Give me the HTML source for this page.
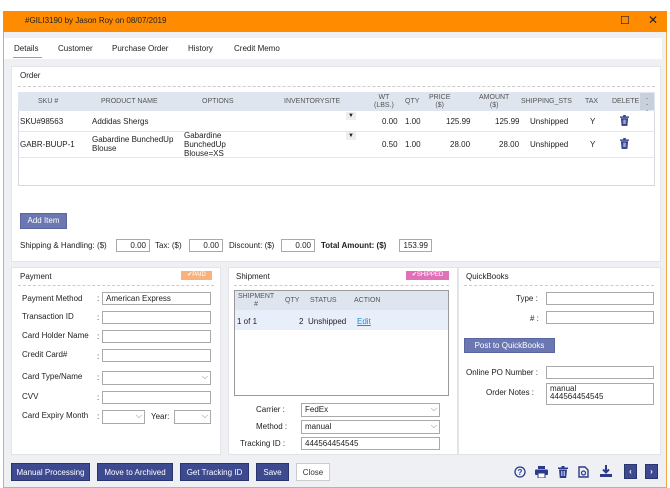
<!DOCTYPE html><html><head><style>
*{box-sizing:border-box;margin:0;padding:0}
body{width:670px;height:488px;background:#fff;font-family:"Liberation Sans",sans-serif;font-size:8px;color:#222;position:relative;overflow:hidden}
.a{position:absolute}
.win{left:3px;top:11px;width:664px;height:477px;border:1px solid #f5a544;background:#eef0f3}
.title{left:3px;top:11px;width:664px;height:21px;background:#ff8c00;color:#222;font-size:8px;padding:5px 0 0 22px}
.panel{background:#fff;border:1px solid #e2e4e8}
.inp{position:absolute;background:#fff;border:1px solid #aaa;height:13px;font-size:8px;padding:1px 3px;white-space:nowrap}
.sel::after{content:"⌵";position:absolute;right:2px;top:0;font-size:8px;color:#777}
.sel{position:absolute;background:#fff;border:1px solid #aaa;height:14px;padding:1px 3px;font-size:8px}
.btn{position:absolute;background:#3d4a8f;color:#fff;font-size:8px;text-align:center;height:18px;line-height:18px;border:1px solid #2a3570;white-space:nowrap}
.dash{position:absolute;border-top:1px dashed #ccc}
.lbl{position:absolute;font-size:8px;white-space:nowrap}
.hd span{white-space:nowrap}
</style></head><body>
<svg width="0" height="0" style="position:absolute"><defs>
<symbol id="trash" viewBox="0 0 10 12"><rect x="0" y="1.5" width="10" height="1.5" fill="#2b3a8a"/><rect x="3.5" y="0" width="3" height="1.5" fill="#2b3a8a"/><path d="M1 3.5h8l-0.8 8.5h-6.4z" fill="#2b3a8a"/><path d="M3.5 5v5M5 5v5M6.5 5v5" stroke="#fff" stroke-width="0.6"/></symbol>
</defs></svg>
<div class="a win"></div>
<div class="a title">#GILI3190 by Jason Roy on 08/07/2019
<span class="a" style="left:617px;top:3px;font-size:11px">☐</span><span class="a" style="left:645px;top:2px;font-size:12px">✕</span></div>
<div class="a" style="left:4px;top:38px;width:658px;height:21px;background:#fff"></div>
<div class="lbl" style="left:14px;top:44px">Details</div>
<div class="a" style="left:13px;top:57px;width:29px;height:1px;background:#ff8c00"></div>
<div class="lbl" style="left:58px;top:44px">Customer</div>
<div class="lbl" style="left:112px;top:44px">Purchase Order</div>
<div class="lbl" style="left:188px;top:44px">History</div>
<div class="lbl" style="left:234px;top:44px">Credit Memo</div>

<div class="a panel" style="left:11px;top:66px;width:650px;height:196px"></div>
<div class="lbl" style="left:20px;top:71px">Order</div>
<div class="dash" style="left:18px;top:86px;width:637px"></div>
<div class="a" style="left:18px;top:92px;width:637px;height:94px;border:1px solid #d6dae0;background:#fff"></div>
<div class="a" style="left:18px;top:92px;width:637px;height:19px;background:#dfe5ee"></div>
<div class="a" style="left:640px;top:93px;width:14px;height:17px;background:#c8d0dc;color:#667;font-size:9px;text-align:center;line-height:6px;padding-top:2px">·<br>·<br>·</div>
<div class="hd" style="position:absolute;left:18px;top:92px;color:#555;font-size:7px">
<span class="a" style="left:20px;top:6px">SKU #</span>
<span class="a" style="left:83px;top:6px">PRODUCT NAME</span>
<span class="a" style="left:184px;top:6px">OPTIONS</span>
<span class="a" style="left:266px;top:6px">INVENTORYSITE</span>
<span class="a" style="left:356px;top:2px;text-align:center;line-height:8px">WT<br>(LBS.)</span>
<span class="a" style="left:387px;top:6px">QTY</span>
<span class="a" style="left:411px;top:2px;text-align:center;line-height:8px">PRICE<br>($)</span>
<span class="a" style="left:461px;top:2px;text-align:center;line-height:8px">AMOUNT<br>($)</span>
<span class="a" style="left:503px;top:6px">SHIPPING_STS</span>
<span class="a" style="left:567px;top:6px">TAX</span>
<span class="a" style="left:594px;top:6px">DELETE</span>
</div>
<div class="a" style="left:18px;top:131px;width:637px;border-top:1px solid #e6e6e6"></div>
<div class="a" style="left:18px;top:157px;width:637px;border-top:1px solid #e6e6e6"></div>
<div class="lbl" style="left:20px;top:117px">SKU#98563</div>
<div class="lbl" style="left:92px;top:117px">Addidas Shergs</div>
<div class="lbl" style="left:382px;top:117px">0.00</div><div class="lbl" style="left:405px;top:117px">1.00</div>
<div class="lbl" style="left:446px;top:117px">125.99</div><div class="lbl" style="left:495px;top:117px">125.99</div>
<div class="lbl" style="left:530px;top:117px">Unshipped</div><div class="lbl" style="left:590px;top:117px">Y</div>
<svg class="a" style="left:620px;top:115px" width="9" height="11"><use href="#trash"/></svg>
<div class="lbl" style="left:346px;top:112px;font-size:6px;background:#eee;padding:1px 2px">▼</div>
<div class="lbl" style="left:20px;top:140px">GABR-BUUP-1</div>
<div class="lbl" style="left:92px;top:135px;line-height:9px">Gabardine BunchedUp<br>Blouse</div>
<div class="lbl" style="left:184px;top:131px;line-height:9px">Gabardine<br>BunchedUp<br>Blouse=XS</div>
<div class="lbl" style="left:346px;top:132px;font-size:6px;background:#eee;padding:1px 2px">▼</div>
<div class="lbl" style="left:382px;top:140px">0.50</div><div class="lbl" style="left:405px;top:140px">1.00</div>
<div class="lbl" style="left:450px;top:140px">28.00</div><div class="lbl" style="left:499px;top:140px">28.00</div>
<div class="lbl" style="left:530px;top:140px">Unshipped</div><div class="lbl" style="left:590px;top:140px">Y</div>
<svg class="a" style="left:620px;top:138px" width="9" height="11"><use href="#trash"/></svg>

<div class="btn" style="left:20px;top:213px;width:47px;height:16px;line-height:14px;background:#6a77b0;border-color:#5966a0">Add Item</div>
<div class="lbl" style="left:20px;top:241px">Shipping &amp; Handling: ($)</div>
<div class="inp" style="left:116px;top:239px;width:34px;text-align:right">0.00</div>
<div class="lbl" style="left:155px;top:241px">Tax: ($)</div>
<div class="inp" style="left:189px;top:239px;width:34px;text-align:right">0.00</div>
<div class="lbl" style="left:229px;top:241px">Discount: ($)</div>
<div class="inp" style="left:281px;top:239px;width:34px;text-align:right">0.00</div>
<div class="lbl" style="left:321px;top:241px;font-weight:bold">Total Amount: ($)</div>
<div class="inp" style="left:399px;top:239px;width:33px;text-align:right">153.99</div>

<div class="a panel" style="left:11px;top:267px;width:210px;height:188px"></div>
<div class="a panel" style="left:228px;top:267px;width:230px;height:188px"></div>
<div class="a panel" style="left:458px;top:267px;width:203px;height:188px"></div>
<div class="lbl" style="left:20px;top:272px">Payment</div>
<div class="a" style="left:181px;top:271px;width:31px;height:9px;background:#f9b27c;color:#fff;font-size:6px;text-align:center;line-height:9px">✔PAID</div>
<div class="dash" style="left:18px;top:285px;width:196px"></div>
<div class="lbl" style="left:22px;top:294px">Payment Method</div><div class="lbl" style="left:97px;top:294px">:</div>
<div class="inp" style="left:102px;top:292px;width:109px">American Express</div>
<div class="lbl" style="left:22px;top:312px">Transaction ID</div><div class="lbl" style="left:97px;top:313px">:</div>
<div class="inp" style="left:102px;top:311px;width:109px"></div>
<div class="lbl" style="left:22px;top:331px">Card Holder Name</div><div class="lbl" style="left:97px;top:332px">:</div>
<div class="inp" style="left:102px;top:330px;width:109px"></div>
<div class="lbl" style="left:22px;top:350px">Credit Card#</div><div class="lbl" style="left:97px;top:352px">:</div>
<div class="inp" style="left:102px;top:349px;width:109px"></div>
<div class="lbl" style="left:22px;top:372px">Card Type/Name</div><div class="lbl" style="left:97px;top:373px">:</div>
<div class="sel" style="left:102px;top:371px;width:109px"></div>
<div class="lbl" style="left:22px;top:392px">CVV</div><div class="lbl" style="left:97px;top:393px">:</div>
<div class="inp" style="left:102px;top:391px;width:109px"></div>
<div class="lbl" style="left:22px;top:411px">Card Expiry Month</div><div class="lbl" style="left:97px;top:412px">:</div>
<div class="sel" style="left:102px;top:410px;width:43px"></div>
<div class="lbl" style="left:151px;top:412px">Year:</div>
<div class="sel" style="left:174px;top:410px;width:37px"></div>

<div class="lbl" style="left:236px;top:272px">Shipment</div>
<div class="a" style="left:406px;top:271px;width:43px;height:9px;background:#e070b8;color:#fff;font-size:6px;text-align:center;line-height:9px">✔SHIPPED</div>
<div class="dash" style="left:234px;top:285px;width:215px"></div>
<div class="a" style="left:234px;top:290px;width:215px;height:106px;border:1px solid #999;background:#fff"></div>
<div class="a" style="left:235px;top:291px;width:213px;height:19px;background:#dfe5ee"></div>
<div class="a" style="left:235px;top:310px;width:213px;height:20px;background:#e8eefa"></div>
<div class="lbl" style="left:238px;top:293px;font-size:7px;color:#555;text-align:center;line-height:8px">SHIPMENT<br>#</div>
<div class="lbl" style="left:285px;top:297px;font-size:7px;color:#555">QTY</div>
<div class="lbl" style="left:310px;top:297px;font-size:7px;color:#555">STATUS</div>
<div class="lbl" style="left:354px;top:297px;font-size:7px;color:#555">ACTION</div>
<div class="lbl" style="left:237px;top:317px">1 of 1</div>
<div class="lbl" style="left:299px;top:317px">2</div>
<div class="lbl" style="left:308px;top:317px">Unshipped</div>
<div class="lbl" style="left:357px;top:317px;color:#1a8fd8;text-decoration:underline">Edit</div>
<div class="lbl" style="left:256px;top:405px">Carrier :</div>
<div class="sel" style="left:301px;top:403px;width:139px">FedEx</div>
<div class="lbl" style="left:256px;top:422px">Method :</div>
<div class="sel" style="left:301px;top:420px;width:139px">manual</div>
<div class="lbl" style="left:240px;top:439px">Tracking ID :</div>
<div class="inp" style="left:301px;top:437px;width:139px">444564454545</div>

<div class="lbl" style="left:466px;top:272px">QuickBooks</div>
<div class="dash" style="left:464px;top:285px;width:190px"></div>
<div class="lbl" style="left:516px;top:294px">Type :</div>
<div class="inp" style="left:546px;top:292px;width:108px"></div>
<div class="lbl" style="left:530px;top:314px"># :</div>
<div class="inp" style="left:546px;top:311px;width:108px"></div>
<div class="btn" style="left:464px;top:338px;width:91px;height:15px;line-height:13px;background:#6a77b0;border-color:#5966a0">Post to QuickBooks</div>
<div class="lbl" style="left:466px;top:368px">Online PO Number :</div>
<div class="inp" style="left:546px;top:366px;width:108px"></div>
<div class="lbl" style="left:486px;top:388px">Order Notes :</div>
<div class="inp" style="left:546px;top:383px;width:108px;height:22px;line-height:8px">manual<br>444564454545</div>

<div class="btn" style="left:11px;top:463px;width:79px">Manual Processing</div>
<div class="btn" style="left:97px;top:463px;width:76px">Move to Archived</div>
<div class="btn" style="left:180px;top:463px;width:69px">Get Tracking ID</div>
<div class="btn" style="left:256px;top:463px;width:33px">Save</div>
<div class="btn" style="left:296px;top:463px;width:34px;background:#fff;color:#333;border-color:#ccc">Close</div>
<svg class="a" style="left:514px;top:466px" width="12" height="12" viewBox="0 0 12 12"><circle cx="6" cy="6" r="5" fill="none" stroke="#2b3a8a" stroke-width="1.3"/><text x="6" y="9" font-size="8" text-anchor="middle" fill="#2b3a8a" font-family="Liberation Sans" font-weight="bold">?</text></svg>
<svg class="a" style="left:535px;top:466px" width="13" height="12" viewBox="0 0 13 12"><rect x="3" y="0" width="7" height="3" fill="#2b3a8a"/><rect x="0" y="3.5" width="13" height="5.5" rx="1" fill="#2b3a8a"/><rect x="3" y="7" width="7" height="5" fill="#fff" stroke="#2b3a8a"/></svg>
<svg class="a" style="left:558px;top:466px" width="10" height="12"><use href="#trash"/></svg>
<svg class="a" style="left:578px;top:465px" width="11" height="13" viewBox="0 0 11 13"><path d="M1 2h6l3 3v7H1z" fill="none" stroke="#2b3a8a" stroke-width="1.4"/><circle cx="5.5" cy="8" r="2" fill="none" stroke="#2b3a8a" stroke-width="1.2"/></svg>
<svg class="a" style="left:600px;top:465px" width="12" height="12" viewBox="0 0 12 12"><path d="M6 0v7M3 4.5l3 3 3-3" stroke="#2b3a8a" stroke-width="2" fill="none"/><rect x="0" y="9" width="12" height="3" fill="#2b3a8a"/></svg>
<div class="btn" style="left:624px;top:464px;width:13px;height:15px;line-height:13px;font-weight:bold">‹</div>
<div class="btn" style="left:645px;top:464px;width:13px;height:15px;line-height:13px;font-weight:bold">›</div>
</body></html>
